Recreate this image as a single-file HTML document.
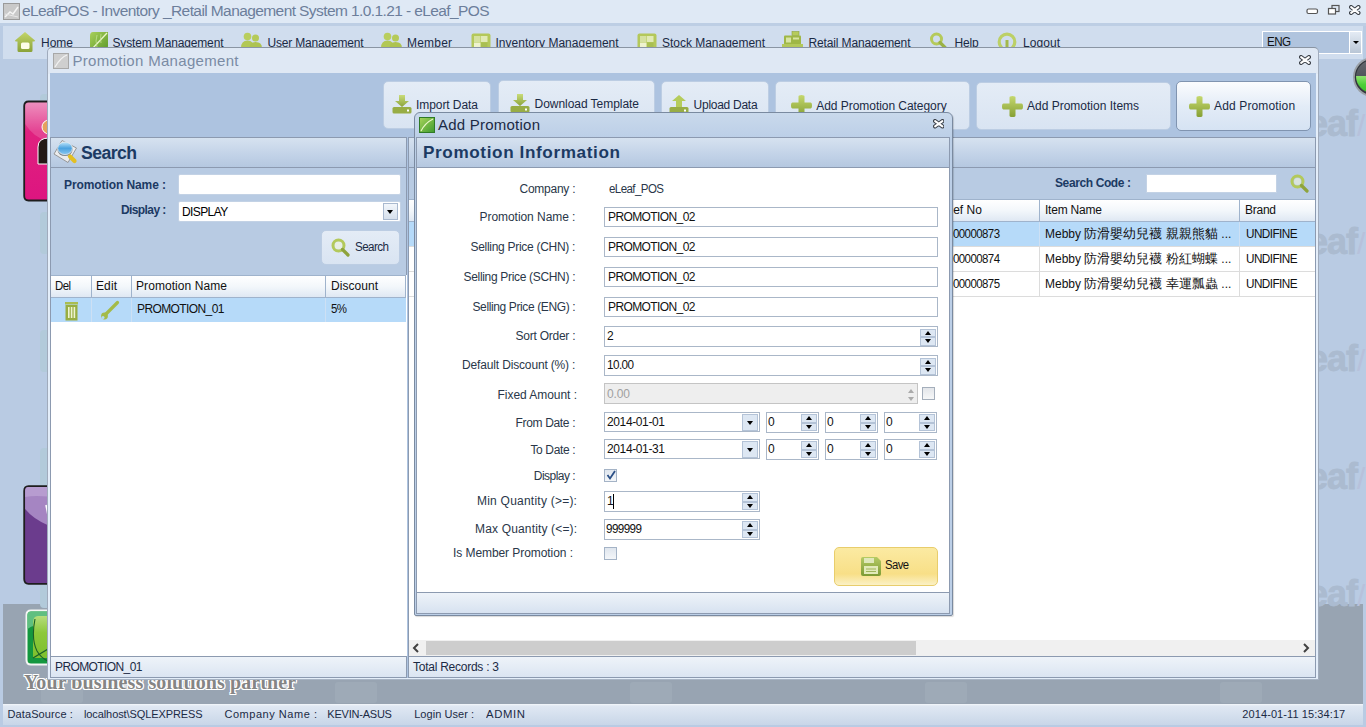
<!DOCTYPE html><html><head><meta charset="utf-8"><style>
html,body{margin:0;padding:0;width:1366px;height:727px;overflow:hidden;font-family:"Liberation Sans",sans-serif;}
body>div{position:absolute;box-sizing:border-box}
.t{white-space:nowrap}
</style></head><body>
<div style="left:0px;top:0px;width:1366px;height:727px;background:#b9cbe3"></div>
<div style="left:0px;top:0px;width:1366px;height:23px;background:#dfe9f5"></div>
<div style="left:0px;top:23px;width:1366px;height:3px;background:#bdcee4"></div>
<svg style="position:absolute;left:3px;top:3px" width="17" height="17" viewBox="0 0 17 17"><rect x="0.5" y="0.5" width="16" height="16" fill="#c9c9c9" stroke="#9a9a9a"/><path d="M2 14 L7 9 L10 11 L15 4" stroke="#f4f4f4" stroke-width="1.5" fill="none"/><path d="M2 11 L15 14" stroke="#e8e8e8" fill="none"/></svg>
<div class="t" style="left:22.0px;top:3.1px;font-size:15.5px;line-height:15.5px;font-weight:normal;color:#6c7e9b;letter-spacing:-0.59px;">eLeafPOS - Inventory _Retail Management System 1.0.1.21 - eLeaf_POS</div>
<svg style="position:absolute;left:1300px;top:0" width="66" height="22" viewBox="0 0 66 22">
<rect x="7" y="9" width="10.5" height="4.5" rx="1.5" fill="#fff" stroke="#555" stroke-width="1.2"/>
<rect x="32" y="5.5" width="7" height="6" fill="none" stroke="#555" stroke-width="1.2"/>
<rect x="28.5" y="8.5" width="7" height="5.5" fill="#fff" stroke="#555" stroke-width="1.2"/>

</svg>
<svg style="position:absolute;left:1349px;top:4.5px" width="11.5" height="10" viewBox="0 0 11.5 10"><path d="M2.1 2.1 L9.4 7.9 M9.4 2.1 L2.1 7.9" stroke="#3b4048" stroke-width="4.2" stroke-linecap="round"/><path d="M2.1 2.1 L9.4 7.9 M9.4 2.1 L2.1 7.9" stroke="#fff" stroke-width="2.0" stroke-linecap="round"/></svg>
<div style="left:3px;top:26px;width:1360px;height:33px;background:#d0ddee"></div>
<div class="t" style="left:41.0px;top:36.8px;font-size:12px;line-height:12px;font-weight:normal;color:#1b2a44;letter-spacing:-0.01px;">Home</div>
<div class="t" style="left:112.5px;top:36.8px;font-size:12px;line-height:12px;font-weight:normal;color:#1b2a44;letter-spacing:-0.15px;">System Management</div>
<div class="t" style="left:267.5px;top:36.8px;font-size:12px;line-height:12px;font-weight:normal;color:#1b2a44;letter-spacing:-0.19px;">User Management</div>
<div class="t" style="left:407.0px;top:36.8px;font-size:12px;line-height:12px;font-weight:normal;color:#1b2a44;letter-spacing:0.20px;">Member</div>
<div class="t" style="left:495.5px;top:36.8px;font-size:12px;line-height:12px;font-weight:normal;color:#1b2a44;letter-spacing:0.02px;">Inventory Management</div>
<div class="t" style="left:662.0px;top:36.8px;font-size:12px;line-height:12px;font-weight:normal;color:#1b2a44;letter-spacing:-0.02px;">Stock Management</div>
<div class="t" style="left:808.5px;top:36.8px;font-size:12px;line-height:12px;font-weight:normal;color:#1b2a44;letter-spacing:-0.13px;">Retail Management</div>
<div class="t" style="left:954.6px;top:36.8px;font-size:12px;line-height:12px;font-weight:normal;color:#1b2a44;letter-spacing:-0.23px;">Help</div>
<div class="t" style="left:1023.0px;top:36.8px;font-size:12px;line-height:12px;font-weight:normal;color:#1b2a44;letter-spacing:0.06px;">Logout</div>
<div style="left:1262px;top:31px;width:100px;height:23px;background:#fff"></div>
<div style="left:1263px;top:32px;width:86px;height:21px;background:#b0c4de"></div>
<div style="left:1350px;top:32px;width:11px;height:21px;background:linear-gradient(#e4ebf4,#b9c6d6)"></div>
<div class="t" style="left:1267.0px;top:36.3px;font-size:12px;line-height:12px;font-weight:normal;color:#111;letter-spacing:-0.60px;transform:scaleX(0.9677);transform-origin:0 0;">ENG</div>
<div style="left:1352.5px;top:41px;width:0;height:0;border-left:3px solid transparent;border-right:3px solid transparent;border-top:3.5px solid #000"></div>
<div style="left:3px;top:604px;width:1360px;height:100px;background:#98a4b2"></div>
<div style="left:3px;top:704px;width:1360px;height:21px;background:linear-gradient(#f4f7fb,#e0e8f3 2px,#c8d6e8)"></div>
<div class="t" style="left:7.5px;top:709.2px;font-size:11px;line-height:11px;font-weight:normal;color:#1b2a44;letter-spacing:0.11px;">DataSource :</div>
<div class="t" style="left:84.0px;top:709.2px;font-size:11px;line-height:11px;font-weight:normal;color:#1b2a44;letter-spacing:-0.10px;">localhost\SQLEXPRESS</div>
<div class="t" style="left:224.5px;top:709.2px;font-size:11px;line-height:11px;font-weight:normal;color:#1b2a44;letter-spacing:0.53px;">Company Name :</div>
<div class="t" style="left:327.3px;top:709.2px;font-size:11px;line-height:11px;font-weight:normal;color:#1b2a44;letter-spacing:-0.22px;">KEVIN-ASUS</div>
<div class="t" style="left:414.2px;top:709.2px;font-size:11px;line-height:11px;font-weight:normal;color:#1b2a44;letter-spacing:0.06px;">Login User :</div>
<div class="t" style="left:486.0px;top:709.2px;font-size:11px;line-height:11px;font-weight:normal;color:#1b2a44;letter-spacing:0.60px;transform:scaleX(1.0307);transform-origin:0 0;">ADMIN</div>
<div class="t" style="left:1242.3px;top:709.2px;font-size:11px;line-height:11px;font-weight:normal;color:#1b2a44;letter-spacing:0.09px;">2014-01-11 15:34:17</div>
<svg style="position:absolute;left:14px;top:31px" width="22" height="22" viewBox="0 0 22 22"><defs><linearGradient id="gh" x1="0" y1="0" x2="0" y2="1"><stop offset="0" stop-color="#c3d56a"/><stop offset="1" stop-color="#8aa238"/></linearGradient></defs>
<path d="M11 1 L21 9.5 Q21 10.5 20 10.5 H18.5 V19.5 Q18.5 21 17 21 H5 Q3.5 21 3.5 19.5 V10.5 H2 Q1 10.5 1 9.5 Z" fill="url(#gh)"/><rect x="7" y="11.5" width="8.5" height="6.5" rx="1.5" fill="#fdfde8"/></svg>
<svg style="position:absolute;left:89px;top:31px" width="20" height="20" viewBox="0 0 20 20"><defs><linearGradient id="glf" x1="0" y1="0" x2="1" y2="1"><stop offset="0" stop-color="#a9d05a"/><stop offset="1" stop-color="#5c9a2a"/></linearGradient></defs>
<path d="M4 1 H19 V15 Q19 19 15 19 H1 V5 Q1 1 4 1 Z" fill="url(#glf)"/><path d="M3 18 L18 2" stroke="#eaf5c8" stroke-width="1.3"/><path d="M8 4 Q6 10 8 16 M12 3 Q11 8 12 12" stroke="#c9e59a" stroke-width="0.7" fill="none"/></svg>
<svg style="position:absolute;left:241px;top:32px" width="21" height="16" viewBox="0 0 21 16"><circle cx="6.5" cy="4.5" r="3.8" fill="#b9ce5e"/><path d="M0 16 Q0 8.5 6.5 8.5 Q13 8.5 13 16 Z" fill="#b2c855"/><circle cx="14.5" cy="6" r="3.5" fill="#b5ca58"/><path d="M8.5 16 Q8.5 10 14.5 10 Q21 10 21 16 Z" fill="#adc350"/></svg>
<svg style="position:absolute;left:381px;top:32px" width="21" height="16" viewBox="0 0 21 16"><circle cx="6.5" cy="4.5" r="3.8" fill="#b9ce5e"/><path d="M0 16 Q0 8.5 6.5 8.5 Q13 8.5 13 16 Z" fill="#b2c855"/><circle cx="14.5" cy="6" r="3.5" fill="#b5ca58"/><path d="M8.5 16 Q8.5 10 14.5 10 Q21 10 21 16 Z" fill="#adc350"/></svg>
<svg style="position:absolute;left:471px;top:33px" width="20" height="15" viewBox="0 0 20 15"><rect x="0.5" y="0.5" width="19" height="16" rx="2" fill="#b4c85a"/><rect x="3" y="3" width="6.5" height="6" fill="#d5e1a0"/><rect x="10" y="3" width="6.5" height="6" fill="#e1eab5"/><rect x="3" y="9.5" width="6.5" height="6" fill="#eef3cf"/><rect x="10" y="9.5" width="6.5" height="6" fill="#a9bf52"/></svg>
<svg style="position:absolute;left:637px;top:33px" width="20" height="15" viewBox="0 0 20 15"><rect x="0.5" y="0.5" width="19" height="16" rx="2" fill="#b4c85a"/><rect x="3" y="3" width="6.5" height="6" fill="#d5e1a0"/><rect x="10" y="3" width="6.5" height="6" fill="#e1eab5"/><rect x="3" y="9.5" width="6.5" height="6" fill="#eef3cf"/><rect x="10" y="9.5" width="6.5" height="6" fill="#a9bf52"/></svg>
<svg style="position:absolute;left:782px;top:31px" width="21" height="17" viewBox="0 0 21 17"><rect x="10" y="0.5" width="7" height="4" fill="#b6cb5c" stroke="#8da23c" stroke-width="0.6"/><rect x="2" y="4.5" width="17" height="9" rx="1" fill="#9fb746"/><rect x="4" y="6.5" width="5" height="5" fill="#d8e4a2"/><rect x="11" y="6.5" width="6" height="2" fill="#d8e4a2"/><rect x="0" y="13" width="21" height="4" fill="#b3c85a"/></svg>
<svg style="position:absolute;left:929px;top:32px" width="19" height="16" viewBox="0 0 19 16"><circle cx="7.5" cy="7" r="5" fill="none" stroke="#b5ca5a" stroke-width="3"/><path d="M11 10.5 L16 15.5" stroke="#9bb244" stroke-width="3.2" stroke-linecap="round"/></svg>
<svg style="position:absolute;left:997px;top:32px" width="20" height="16" viewBox="0 0 20 16"><circle cx="10" cy="10" r="7.8" fill="none" stroke="#bcd066" stroke-width="3.2"/><rect x="8.5" y="8" width="3" height="8" fill="#a3b94a"/></svg>
<div class="t" style="left:1308px;top:106.4px;font-size:36px;line-height:36px;font-weight:bold;color:#abbbd0;letter-spacing:-1px;-webkit-text-stroke:0.8px #abbbd0">eaf<span style="color:#b7c1db;-webkit-text-stroke:0;font-weight:normal;font-size:30px">/</span></div>
<div class="t" style="left:1308px;top:223.9px;font-size:36px;line-height:36px;font-weight:bold;color:#abbbd0;letter-spacing:-1px;-webkit-text-stroke:0.8px #abbbd0">eaf<span style="color:#b7c1db;-webkit-text-stroke:0;font-weight:normal;font-size:30px">/</span></div>
<div class="t" style="left:1308px;top:341.4px;font-size:36px;line-height:36px;font-weight:bold;color:#abbbd0;letter-spacing:-1px;-webkit-text-stroke:0.8px #abbbd0">eaf<span style="color:#b7c1db;-webkit-text-stroke:0;font-weight:normal;font-size:30px">/</span></div>
<div class="t" style="left:1308px;top:458.9px;font-size:36px;line-height:36px;font-weight:bold;color:#abbbd0;letter-spacing:-1px;-webkit-text-stroke:0.8px #abbbd0">eaf<span style="color:#b7c1db;-webkit-text-stroke:0;font-weight:normal;font-size:30px">/</span></div>
<div class="t" style="left:1308px;top:576.4px;font-size:36px;line-height:36px;font-weight:bold;color:#abbbd0;letter-spacing:-1px;-webkit-text-stroke:0.8px #abbbd0">eaf<span style="color:#b7c1db;-webkit-text-stroke:0;font-weight:normal;font-size:30px">/</span></div>
<svg style="position:absolute;left:1352px;top:56px" width="14" height="42" viewBox="0 0 14 42"><defs><linearGradient id="gci" x1="0" y1="0" x2="0" y2="1"><stop offset="0" stop-color="#64696f"/><stop offset="1" stop-color="#3c4046"/></linearGradient><linearGradient id="ggr" x1="0" y1="0" x2="0" y2="1"><stop offset="0" stop-color="#8fe26f"/><stop offset="0.5" stop-color="#4fcf38"/><stop offset="1" stop-color="#3cbf2a"/></linearGradient></defs><circle cx="21" cy="21" r="20" fill="#9aa0a6"/><circle cx="21" cy="21" r="18.2" fill="#30343a"/><circle cx="21" cy="21" r="17" fill="url(#gci)"/><path d="M4 20 H38 A17 17 0 0 1 4 20 Z" fill="url(#ggr)"/></svg>
<div style="left:40px;top:94px;width:8px;height:42px;background:#b2cada;border-radius:4px 0 0 4px"></div>
<div style="left:40px;top:212px;width:8px;height:42px;background:#b2cada;border-radius:4px 0 0 4px"></div>
<div style="left:40px;top:330px;width:8px;height:42px;background:#b2cada;border-radius:4px 0 0 4px"></div>
<div style="left:40px;top:448px;width:8px;height:42px;background:#b2cada;border-radius:4px 0 0 4px"></div>
<div style="left:40px;top:566px;width:8px;height:42px;background:#b2cada;border-radius:4px 0 0 4px"></div>
<svg style="position:absolute;left:23px;top:100px" width="25" height="102" viewBox="0 0 25 102"><defs><linearGradient id="gpk" x1="0" y1="0" x2="0" y2="1"><stop offset="0" stop-color="#ea7db3"/><stop offset="0.3" stop-color="#e0217f"/><stop offset="1" stop-color="#dd1580"/></linearGradient></defs>
<path d="M30 1.5 H5.5 Q1.2 1.5 1.2 6 V96 Q1.2 100.5 5.5 100.5 H30" fill="url(#gpk)" stroke="#1e1e1e" stroke-width="1.8"/>
<path d="M2.2 24 Q12 40 30 42 V2.5 H5.5 Q2.2 2.5 2.2 6 Z" fill="#ffffff" opacity="0.16"/>
<circle cx="26" cy="27" r="7" fill="#e6a15e" stroke="#fff" stroke-width="1"/>
<path d="M15 64 V47 Q15 38 26 38 V64 Z" fill="#231816" stroke="#fff" stroke-width="1"/></svg>
<svg style="position:absolute;left:23px;top:485px" width="25" height="100" viewBox="0 0 25 100"><defs><linearGradient id="gpu" x1="0" y1="0" x2="0" y2="1"><stop offset="0" stop-color="#b9a0cf"/><stop offset="0.25" stop-color="#a27fbf"/><stop offset="0.26" stop-color="#6d3f8f"/><stop offset="1" stop-color="#6a3a8c"/></linearGradient></defs>
<path d="M30 1.2 H5.5 Q1.2 1.2 1.2 6 V94 Q1.2 98.8 5.5 98.8 H30" fill="#6b3c8d" stroke="#1e1e1e" stroke-width="1.8"/>
<path d="M2.1 6 Q2.1 2.1 5.5 2.1 H30 V42 Q12 36 2.1 24 Z" fill="#a585c2"/>
<path d="M2.1 6 Q2.1 2.1 5.5 2.1 H30 V12 Q12 10 2.1 12 Z" fill="#c3abd8" opacity="0.6"/>
<path d="M23 20 L25 30" stroke="#fff" stroke-width="1.6"/></svg>
<div style="left:41px;top:682px;width:42px;height:21px;background:#9eaab7;border-radius:3px"></div>
<div style="left:335px;top:682px;width:42px;height:21px;background:#9eaab7;border-radius:3px"></div>
<div style="left:630px;top:682px;width:42px;height:21px;background:#9eaab7;border-radius:3px"></div>
<div style="left:925px;top:682px;width:42px;height:21px;background:#9eaab7;border-radius:3px"></div>
<div style="left:1220px;top:682px;width:42px;height:21px;background:#9eaab7;border-radius:3px"></div>
<svg style="position:absolute;left:25px;top:609px" width="23" height="57" viewBox="0 0 23 57"><defs><linearGradient id="ggl" x1="0" y1="0" x2="0" y2="1"><stop offset="0" stop-color="#b5dd7c"/><stop offset="0.4" stop-color="#8cc83a"/><stop offset="1" stop-color="#7dbf2e"/></linearGradient></defs>
<path d="M30 1.5 H6 Q1.5 1.5 1.5 6 V51 Q1.5 55.5 6 55.5 H30" fill="#13973f" stroke="#f4f6f4" stroke-width="2"/>
<path d="M2.5 6 Q2.5 2.5 6 2.5 H30 V14 Q10 14 2.5 20 Z" fill="#5fbf80"/>
<path d="M30 7 H13 Q8 7 8 14 V49 H30 Z" fill="url(#ggl)"/>
<path d="M10 10 Q6 30 12 42 Q16 49 23 52" stroke="#1a5f28" stroke-width="1.1" fill="none"/><path d="M8 49 L23 40" stroke="#1a5f28" stroke-width="1.3"/></svg>
<div class="t" style="left:24px;top:670.5px;font-family:'Liberation Serif',serif;font-weight:bold;font-size:20px;line-height:22px;color:#858585;letter-spacing:0.1px;-webkit-text-stroke:0;text-shadow:-1px -1px 0 #fff,1px -1px 0 #fff,-1px 1px 0 #fff,1px 1px 0 #fff,0 1px 0 #fff,0 -1px 0 #fff,1px 0 0 #fff,-1px 0 0 #fff">Your business solutions partner</div>
<div style="left:47px;top:47px;width:1272px;height:633px;background:linear-gradient(#dfe8f4 26px,#e4eefa 26px);border:1px solid #a0abbc;border-top-color:#8a95a3;border-bottom-color:#a8b4c4;border-radius:5px 5px 0 0"></div>
<svg style="position:absolute;left:53px;top:53px" width="16" height="16" viewBox="0 0 16 16"><rect x="0.5" y="0.5" width="15" height="15" fill="#cfcfcf" stroke="#a8a8a8"/><path d="M2 14 Q8 4 14 2" stroke="#f2f2f2" stroke-width="1.3" fill="none"/></svg>
<div class="t" style="left:72.5px;top:53.3px;font-size:15px;line-height:15px;font-weight:normal;color:#7a8ba4;letter-spacing:0.31px;">Promotion Management</div>
<svg style="position:absolute;left:1298.5px;top:54.5px" width="12" height="10" viewBox="0 0 12 10"><path d="M2.1 2.1 L9.9 7.9 M9.9 2.1 L2.1 7.9" stroke="#3b4048" stroke-width="4.2" stroke-linecap="round"/><path d="M2.1 2.1 L9.9 7.9 M9.9 2.1 L2.1 7.9" stroke="#fff" stroke-width="2.0" stroke-linecap="round"/></svg>
<div style="left:50px;top:73px;width:1266px;height:605px;background:#adc3e0"></div>
<div style="left:383px;top:81px;width:108px;height:48px;border:1px solid #bccde3;border-radius:5px;background:linear-gradient(#e4ecf6,#d9e4f2);"></div>
<svg style="position:absolute;left:392px;top:95px" width="20" height="19" viewBox="0 0 20 19"><defs><linearGradient id="gdl1" x1="0" y1="0" x2="0" y2="1"><stop offset="0" stop-color="#c9dc7a"/><stop offset="1" stop-color="#8ba33a"/></linearGradient></defs><path d="M7 0 H13 V6 H17 L10 12 L3 6 H7 Z" fill="url(#gdl1)"/><rect x="0.5" y="12" width="19" height="6.5" rx="1.5" fill="#98ad45"/><rect x="15" y="14.5" width="2" height="2" fill="#fff"/></svg>
<div class="t" style="left:416.0px;top:98.8px;font-size:12px;line-height:12px;font-weight:normal;color:#1b2a44;letter-spacing:-0.07px;">Import Data</div>
<div style="left:498px;top:80px;width:157px;height:49px;border:1px solid #bccde3;border-radius:5px;background:linear-gradient(#e4ecf6,#d9e4f2);"></div>
<svg style="position:absolute;left:510px;top:94px" width="20" height="19" viewBox="0 0 20 19"><defs><linearGradient id="gdl2" x1="0" y1="0" x2="0" y2="1"><stop offset="0" stop-color="#c9dc7a"/><stop offset="1" stop-color="#8ba33a"/></linearGradient></defs><path d="M7 0 H13 V6 H17 L10 12 L3 6 H7 Z" fill="url(#gdl2)"/><rect x="0.5" y="12" width="19" height="6.5" rx="1.5" fill="#98ad45"/><rect x="15" y="14.5" width="2" height="2" fill="#fff"/></svg>
<div class="t" style="left:534.5px;top:98.3px;font-size:12px;line-height:12px;font-weight:normal;color:#1b2a44;letter-spacing:-0.04px;">Download Template</div>
<div style="left:661px;top:81px;width:108px;height:48px;border:1px solid #bccde3;border-radius:5px;background:linear-gradient(#e4ecf6,#d9e4f2);"></div>
<svg style="position:absolute;left:669px;top:95px" width="20" height="19" viewBox="0 0 20 19"><path d="M10 0 L17 6 H13 V12 H7 V6 H3 Z" fill="#b5cc5c"/><rect x="0.5" y="12" width="19" height="6.5" rx="1.5" fill="#98ad45"/><rect x="15" y="14.5" width="2" height="2" fill="#fff"/></svg>
<div class="t" style="left:693.6px;top:98.8px;font-size:12px;line-height:12px;font-weight:normal;color:#1b2a44;letter-spacing:-0.27px;">Upload Data</div>
<div style="left:775px;top:81px;width:195px;height:49px;border:1px solid #bccde3;border-radius:5px;background:linear-gradient(#e4ecf6,#d9e4f2);"></div>
<svg style="position:absolute;left:791px;top:95px" width="21" height="21" viewBox="0 0 21 21"><defs><linearGradient id="gp4" x1="0" y1="0" x2="0" y2="1"><stop offset="0" stop-color="#c5d86e"/><stop offset="1" stop-color="#86a034"/></linearGradient></defs><path d="M7.5 1.5 Q7.5 0 10.5 0 Q13.5 0 13.5 1.5 V7.5 H19.5 Q21 7.5 21 10.5 Q21 13.5 19.5 13.5 H13.5 V19.5 Q13.5 21 10.5 21 Q7.5 21 7.5 19.5 V13.5 H1.5 Q0 13.5 0 10.5 Q0 7.5 1.5 7.5 H7.5 Z" fill="url(#gp4)"/></svg>
<div class="t" style="left:816.3px;top:99.8px;font-size:12px;line-height:12px;font-weight:normal;color:#1b2a44;letter-spacing:-0.05px;">Add Promotion Category</div>
<div style="left:976px;top:82px;width:195px;height:48px;border:1px solid #bccde3;border-radius:5px;background:linear-gradient(#e4ecf6,#d9e4f2);"></div>
<svg style="position:absolute;left:1002px;top:96px" width="21" height="21" viewBox="0 0 21 21"><defs><linearGradient id="gp5" x1="0" y1="0" x2="0" y2="1"><stop offset="0" stop-color="#c5d86e"/><stop offset="1" stop-color="#86a034"/></linearGradient></defs><path d="M7.5 1.5 Q7.5 0 10.5 0 Q13.5 0 13.5 1.5 V7.5 H19.5 Q21 7.5 21 10.5 Q21 13.5 19.5 13.5 H13.5 V19.5 Q13.5 21 10.5 21 Q7.5 21 7.5 19.5 V13.5 H1.5 Q0 13.5 0 10.5 Q0 7.5 1.5 7.5 H7.5 Z" fill="url(#gp5)"/></svg>
<div class="t" style="left:1027.0px;top:99.8px;font-size:12px;line-height:12px;font-weight:normal;color:#1b2a44;letter-spacing:-0.00px;">Add Promotion Items</div>
<div style="left:1176px;top:81px;width:135px;height:50px;border:1px solid #8094b0;border-radius:5px;background:linear-gradient(#fbfcfe,#e3ecf7 50%,#d6e3f3);"></div>
<svg style="position:absolute;left:1189px;top:96px" width="21" height="21" viewBox="0 0 21 21"><defs><linearGradient id="gp6" x1="0" y1="0" x2="0" y2="1"><stop offset="0" stop-color="#c5d86e"/><stop offset="1" stop-color="#86a034"/></linearGradient></defs><path d="M7.5 1.5 Q7.5 0 10.5 0 Q13.5 0 13.5 1.5 V7.5 H19.5 Q21 7.5 21 10.5 Q21 13.5 19.5 13.5 H13.5 V19.5 Q13.5 21 10.5 21 Q7.5 21 7.5 19.5 V13.5 H1.5 Q0 13.5 0 10.5 Q0 7.5 1.5 7.5 H7.5 Z" fill="url(#gp6)"/></svg>
<div class="t" style="left:1214.0px;top:99.8px;font-size:12px;line-height:12px;font-weight:normal;color:#1b2a44;letter-spacing:0.14px;">Add Promotion</div>
<div style="left:50px;top:137px;width:357px;height:541px;border:1px solid #8c9ab0;background:#b8cbe3"></div>
<div style="left:50px;top:137px;width:357px;height:31px;border:1px solid #8c9ab0;background:linear-gradient(#d6e2f0,#c3d3e8 55%,#b5c8e0);"></div>
<svg style="position:absolute;left:53px;top:139px" width="26" height="26" viewBox="0 0 26 26"><defs><linearGradient id="glens" x1="0" y1="0" x2="0" y2="1"><stop offset="0" stop-color="#bfe6fb"/><stop offset="0.5" stop-color="#4aa2e0"/><stop offset="1" stop-color="#8cc8ef"/></linearGradient></defs>
<path d="M1 15 L9 1.5 L23.5 9 L15 23.5 Z" fill="#ececec" stroke="#8f8f8f" stroke-width="0.9"/>
<ellipse cx="12" cy="10.5" rx="7.6" ry="6.6" fill="#7d8790"/>
<ellipse cx="12" cy="9.3" rx="7.3" ry="6.3" fill="url(#glens)" stroke="#dfe9ef" stroke-width="0.8"/>
<path d="M17 17.5 L21.5 22" stroke="#e3bf22" stroke-width="4.2" stroke-linecap="round"/>
</svg>
<div class="t" style="left:81.0px;top:143.8px;font-size:18px;line-height:18px;font-weight:bold;color:#1c3a63;letter-spacing:-0.60px;transform:scaleX(0.9816);transform-origin:0 0;">Search</div>
<div class="t" style="left:64.0px;top:178.8px;font-size:12px;line-height:12px;font-weight:bold;color:#1c3a63;letter-spacing:-0.09px;">Promotion Name :</div>
<div class="t" style="left:121.0px;top:203.8px;font-size:12px;line-height:12px;font-weight:bold;color:#1c3a63;letter-spacing:-0.60px;">Display :</div>
<div style="left:178px;top:174px;width:223px;height:21px;background:#fff;border:1px solid #c3d2e5;border-radius:2px"></div>
<div style="left:178px;top:201px;width:223px;height:21px;background:#fff;border:1px solid #c3d2e5;border-radius:2px"></div>
<div class="t" style="left:182.0px;top:205.8px;font-size:12px;line-height:12px;font-weight:normal;color:#000;letter-spacing:-0.60px;">DISPLAY</div>
<div style="left:383px;top:203px;width:15px;height:17px;border:1px solid #a9b9cf;background:linear-gradient(#f2f6fb,#d6e0ec)"></div>
<div style="left:387px;top:210px;width:0;height:0;border-left:3.5px solid transparent;border-right:3.5px solid transparent;border-top:4px solid #000"></div>
<div style="left:321px;top:230px;width:79px;height:35px;border:1px solid #bccde3;border-radius:5px;background:linear-gradient(#e4ecf6,#d9e4f2)"></div>
<svg style="position:absolute;left:331px;top:238px" width="19" height="19" viewBox="0 0 19 19"><circle cx="7.5" cy="7.5" r="5.5" fill="none" stroke="#b3c95b" stroke-width="3"/><circle cx="7.5" cy="7.5" r="3.5" fill="#eef4d8" opacity="0.6"/><path d="M11.5 11.5 L17 17" stroke="#8ea33c" stroke-width="3.2" stroke-linecap="round"/></svg>
<div class="t" style="left:355.0px;top:240.8px;font-size:12px;line-height:12px;font-weight:normal;color:#1b2a44;letter-spacing:-0.60px;transform:scaleX(0.9710);transform-origin:0 0;">Search</div>
<div style="left:51px;top:275px;width:356px;height:381px;background:#fff"></div>
<div style="left:51px;top:275px;width:355px;height:23px;background:linear-gradient(#ffffff,#f3f7fb 50%,#dfe8f3);border:1px solid #9fb3cc;border-left:none"></div>
<div style="left:91px;top:276px;width:1px;height:21px;background:#9fb3cc"></div>
<div style="left:131px;top:276px;width:1px;height:21px;background:#9fb3cc"></div>
<div style="left:325px;top:276px;width:1px;height:21px;background:#9fb3cc"></div>
<div class="t" style="left:55.0px;top:279.8px;font-size:12px;line-height:12px;font-weight:normal;color:#111;letter-spacing:-0.60px;transform:scaleX(0.9515);transform-origin:0 0;">Del</div>
<div class="t" style="left:96.0px;top:279.8px;font-size:12px;line-height:12px;font-weight:normal;color:#111;letter-spacing:0.11px;">Edit</div>
<div class="t" style="left:136.0px;top:279.8px;font-size:12px;line-height:12px;font-weight:normal;color:#111;letter-spacing:0.07px;">Promotion Name</div>
<div class="t" style="left:331.0px;top:279.8px;font-size:12px;line-height:12px;font-weight:normal;color:#111;letter-spacing:0.04px;">Discount</div>
<div style="left:51px;top:298px;width:355px;height:24px;background:#b6daf9"></div>
<div style="left:91px;top:298px;width:1px;height:24px;background:#cde0f4"></div>
<div style="left:131px;top:298px;width:1px;height:24px;background:#cde0f4"></div>
<div style="left:325px;top:298px;width:1px;height:24px;background:#cde0f4"></div>
<svg style="position:absolute;left:64px;top:301px" width="15" height="20" viewBox="0 0 15 20"><rect x="1" y="1" width="13" height="2.5" fill="#a9bd52"/><rect x="1.5" y="4" width="12" height="15.5" fill="#98ae42"/><rect x="4" y="6" width="1.6" height="11" fill="#eef3d0"/><rect x="6.8" y="6" width="1.6" height="11" fill="#eef3d0"/><rect x="9.6" y="6" width="1.6" height="11" fill="#eef3d0"/></svg>
<svg style="position:absolute;left:100px;top:300px" width="21" height="21" viewBox="0 0 21 21"><path d="M17.5 2.5 L5 15" stroke="#a4bb48" stroke-width="3.2" stroke-linecap="round"/><circle cx="4.5" cy="16" r="3.4" fill="#a4bb48"/><circle cx="3" cy="17.5" r="1.5" fill="#b6daf9"/></svg>
<div class="t" style="left:137.0px;top:302.8px;font-size:12px;line-height:12px;font-weight:normal;color:#111;letter-spacing:-0.60px;">PROMOTION_01</div>
<div class="t" style="left:331.0px;top:302.8px;font-size:12px;line-height:12px;font-weight:normal;color:#111;letter-spacing:-0.60px;transform:scaleX(0.9556);transform-origin:0 0;">5%</div>
<div style="left:50px;top:656px;width:357px;height:22px;border:1px solid #8c9ab0;background:linear-gradient(#eef3f9,#dbe5f2)"></div>
<div class="t" style="left:55.0px;top:660.8px;font-size:12px;line-height:12px;font-weight:normal;color:#1b2a44;letter-spacing:-0.60px;">PROMOTION_01</div>
<div style="left:408px;top:137px;width:908px;height:541px;border:1px solid #8c9ab0;background:#b8cbe3"></div>
<div style="left:408px;top:137px;width:908px;height:31px;border:1px solid #8c9ab0;background:linear-gradient(#d6e2f0,#c3d3e8 55%,#b5c8e0);"></div>
<div class="t" style="left:1055.0px;top:176.8px;font-size:12px;line-height:12px;font-weight:bold;color:#1c3a63;letter-spacing:-0.39px;">Search Code :</div>
<div style="left:1146px;top:174px;width:131px;height:19px;background:#fff;border:1px solid #c3d2e5"></div>
<svg style="position:absolute;left:1290px;top:174px" width="19" height="19" viewBox="0 0 19 19"><circle cx="7.5" cy="7.5" r="5.5" fill="none" stroke="#b3c95b" stroke-width="3"/><circle cx="7.5" cy="7.5" r="3.5" fill="#eef4d8" opacity="0.6"/><path d="M11.5 11.5 L17 17" stroke="#8ea33c" stroke-width="3.2" stroke-linecap="round"/></svg>
<div style="left:409px;top:199px;width:906px;height:457px;background:#fff"></div>
<div style="left:409px;top:199px;width:906px;height:23px;background:linear-gradient(#ffffff,#f3f7fb 50%,#dfe8f3);border-top:1px solid #9fb3cc;border-bottom:1px solid #9fb3cc"></div>
<div style="left:1039px;top:200px;width:1px;height:21px;background:#9fb3cc"></div>
<div style="left:1239px;top:200px;width:1px;height:21px;background:#9fb3cc"></div>
<div class="t" style="left:944.5px;top:203.8px;font-size:12px;line-height:12px;font-weight:normal;color:#111;letter-spacing:0.00px;">Ref No</div>
<div class="t" style="left:1045.0px;top:203.8px;font-size:12px;line-height:12px;font-weight:normal;color:#111;letter-spacing:-0.21px;">Item Name</div>
<div class="t" style="left:1245.0px;top:203.8px;font-size:12px;line-height:12px;font-weight:normal;color:#111;letter-spacing:-0.25px;">Brand</div>
<div style="left:409px;top:222px;width:906px;height:24px;background:#b6daf9"></div>
<div style="left:409px;top:246px;width:906px;height:1px;background:#dcdcdc"></div>
<div style="left:1039px;top:222px;width:1px;height:24px;background:#cde0f4"></div>
<div style="left:1239px;top:222px;width:1px;height:24px;background:#cde0f4"></div>
<div class="t" style="left:953.0px;top:228.3px;font-size:12px;line-height:12px;font-weight:normal;color:#111;letter-spacing:-0.60px;transform:scaleX(0.9558);transform-origin:0 0;">00000873</div>
<div class="t" style="left:1045px;top:228.3px;font-size:12px;line-height:12px;color:#111">Mebby <span style="font-size:13px">防滑嬰幼兒襪 親親熊貓</span> ...</div>
<div class="t" style="left:1245.5px;top:228.3px;font-size:12px;line-height:12px;font-weight:normal;color:#111;letter-spacing:-0.60px;transform:scaleX(0.9815);transform-origin:0 0;">UNDIFINE</div>
<div style="left:409px;top:271px;width:906px;height:1px;background:#dcdcdc"></div>
<div style="left:1039px;top:247px;width:1px;height:24px;background:#dcdcdc"></div>
<div style="left:1239px;top:247px;width:1px;height:24px;background:#dcdcdc"></div>
<div class="t" style="left:953.0px;top:253.3px;font-size:12px;line-height:12px;font-weight:normal;color:#111;letter-spacing:-0.60px;transform:scaleX(0.9558);transform-origin:0 0;">00000874</div>
<div class="t" style="left:1045px;top:253.3px;font-size:12px;line-height:12px;color:#111">Mebby <span style="font-size:13px">防滑嬰幼兒襪 粉紅蝴蝶</span> ...</div>
<div class="t" style="left:1245.5px;top:253.3px;font-size:12px;line-height:12px;font-weight:normal;color:#111;letter-spacing:-0.60px;transform:scaleX(0.9815);transform-origin:0 0;">UNDIFINE</div>
<div style="left:409px;top:296px;width:906px;height:1px;background:#dcdcdc"></div>
<div style="left:1039px;top:272px;width:1px;height:24px;background:#dcdcdc"></div>
<div style="left:1239px;top:272px;width:1px;height:24px;background:#dcdcdc"></div>
<div class="t" style="left:953.0px;top:278.3px;font-size:12px;line-height:12px;font-weight:normal;color:#111;letter-spacing:-0.60px;transform:scaleX(0.9558);transform-origin:0 0;">00000875</div>
<div class="t" style="left:1045px;top:278.3px;font-size:12px;line-height:12px;color:#111">Mebby <span style="font-size:13px">防滑嬰幼兒襪 幸運瓢蟲</span> ...</div>
<div class="t" style="left:1245.5px;top:278.3px;font-size:12px;line-height:12px;font-weight:normal;color:#111;letter-spacing:-0.60px;transform:scaleX(0.9815);transform-origin:0 0;">UNDIFINE</div>
<div style="left:409px;top:640px;width:906px;height:16px;background:#f0f0f0"></div>
<div style="left:426px;top:641px;width:490px;height:14px;background:#cdcdcd"></div>
<svg style="position:absolute;left:412px;top:643px" width="8" height="10" viewBox="0 0 8 10"><path d="M6 1 L2 5 L6 9" stroke="#404040" stroke-width="2" fill="none"/></svg>
<svg style="position:absolute;left:1302px;top:643px" width="8" height="10" viewBox="0 0 8 10"><path d="M2 1 L6 5 L2 9" stroke="#404040" stroke-width="2" fill="none"/></svg>
<div style="left:408px;top:656px;width:908px;height:22px;border:1px solid #8c9ab0;background:linear-gradient(#eef3f9,#dbe5f2)"></div>
<div class="t" style="left:413.0px;top:660.8px;font-size:12px;line-height:12px;font-weight:normal;color:#1b2a44;letter-spacing:-0.25px;">Total Records : 3</div>
<div style="left:414px;top:112px;width:539px;height:504px;border:1px solid #7a8aa0;border-radius:6px 6px 2px 2px;background:linear-gradient(#c9d9ec,#bccfe7 25px,#bccfe7);box-shadow:1px 1px 1px rgba(0,0,0,0.15)"></div>
<svg style="position:absolute;left:419px;top:117px" width="16" height="16" viewBox="0 0 16 16"><defs><linearGradient id="gl" x1="0" y1="0" x2="1" y2="1"><stop offset="0" stop-color="#a8d45a"/><stop offset="1" stop-color="#3d9a2e"/></linearGradient></defs><rect x="0.5" y="0.5" width="15" height="15" fill="url(#gl)" stroke="#2f7a25"/><path d="M2 14 Q6 6 14 2" stroke="#e9f6c8" stroke-width="1.2" fill="none"/></svg>
<div class="t" style="left:438.0px;top:116.8px;font-size:15px;line-height:15px;font-weight:normal;color:#1b2a44;letter-spacing:0.23px;">Add Promotion</div>
<svg style="position:absolute;left:932.5px;top:119px" width="11.5" height="9.5" viewBox="0 0 11.5 9.5"><path d="M2.1 2.1 L9.4 7.4 M9.4 2.1 L2.1 7.4" stroke="#3b4048" stroke-width="4.2" stroke-linecap="round"/><path d="M2.1 2.1 L9.4 7.4 M9.4 2.1 L2.1 7.4" stroke="#fff" stroke-width="2.0" stroke-linecap="round"/></svg>
<div style="left:416px;top:137px;width:534px;height:477px;border:1px solid #8c9ab0;background:#fff"></div>
<div style="left:416px;top:137px;width:534px;height:31px;border:1px solid #8c9ab0;background:linear-gradient(#d6e2f0,#c3d3e8 55%,#b5c8e0)"></div>
<div class="t" style="left:423.0px;top:144.2px;font-size:17px;line-height:17px;font-weight:bold;color:#1c3a63;letter-spacing:0.60px;transform:scaleX(1.0092);transform-origin:0 0;">Promotion Information</div>
<div style="left:416px;top:592px;width:534px;height:22px;border:1px solid #8c9ab0;background:linear-gradient(#eef3f9,#d7e2f0)"></div>
<div class="t" style="left:519.5px;top:183.3px;font-size:12px;line-height:12px;font-weight:normal;color:#2a3749;letter-spacing:-0.25px;">Company :</div>
<div class="t" style="left:609.0px;top:183.3px;font-size:12px;line-height:12px;font-weight:normal;color:#2a3749;letter-spacing:-0.60px;transform:scaleX(0.9613);transform-origin:0 0;">eLeaf_POS</div>
<div class="t" style="left:479.5px;top:210.8px;font-size:12px;line-height:12px;font-weight:normal;color:#2a3749;letter-spacing:-0.05px;">Promotion Name :</div>
<div style="left:604px;top:207px;width:334px;height:20px;border:1px solid #aab7c8;background:#fff"></div>
<div class="t" style="left:608.0px;top:210.8px;font-size:12px;line-height:12px;font-weight:normal;color:#111;letter-spacing:-0.60px;">PROMOTION_02</div>
<div class="t" style="left:470.5px;top:240.8px;font-size:12px;line-height:12px;font-weight:normal;color:#2a3749;letter-spacing:-0.29px;">Selling Price (CHN) :</div>
<div style="left:604px;top:237px;width:334px;height:20px;border:1px solid #aab7c8;background:#fff"></div>
<div class="t" style="left:608.0px;top:240.8px;font-size:12px;line-height:12px;font-weight:normal;color:#111;letter-spacing:-0.60px;">PROMOTION_02</div>
<div class="t" style="left:463.5px;top:270.8px;font-size:12px;line-height:12px;font-weight:normal;color:#2a3749;letter-spacing:-0.32px;">Selling Price (SCHN) :</div>
<div style="left:604px;top:267px;width:334px;height:20px;border:1px solid #aab7c8;background:#fff"></div>
<div class="t" style="left:608.0px;top:270.8px;font-size:12px;line-height:12px;font-weight:normal;color:#111;letter-spacing:-0.60px;">PROMOTION_02</div>
<div class="t" style="left:472.5px;top:300.8px;font-size:12px;line-height:12px;font-weight:normal;color:#2a3749;letter-spacing:-0.38px;">Selling Price (ENG) :</div>
<div style="left:604px;top:297px;width:334px;height:20px;border:1px solid #aab7c8;background:#fff"></div>
<div class="t" style="left:608.0px;top:300.8px;font-size:12px;line-height:12px;font-weight:normal;color:#111;letter-spacing:-0.60px;">PROMOTION_02</div>
<div class="t" style="left:515.5px;top:330.3px;font-size:12px;line-height:12px;font-weight:normal;color:#2a3749;letter-spacing:-0.24px;">Sort Order :</div>
<div style="left:604px;top:326px;width:334px;height:21px;border:1px solid #aab7c8;background:#fff"></div>
<div style="left:920px;top:328.5px;width:16px;height:8.5px;border:1px solid #b4c3d7;background:#dde7f3"></div>
<div style="left:920px;top:337.0px;width:16px;height:8.5px;border:1px solid #b4c3d7;background:#dde7f3"></div>
<div style="left:924.5px;top:330.5px;width:0;height:0;border-left:3.5px solid transparent;border-right:3.5px solid transparent;border-bottom:4px solid #000"></div>
<div style="left:924.5px;top:339.0px;width:0;height:0;border-left:3.5px solid transparent;border-right:3.5px solid transparent;border-top:4px solid #000"></div>
<div class="t" style="left:607.0px;top:330.3px;font-size:12px;line-height:12px;font-weight:normal;color:#111;letter-spacing:0.00px;">2</div>
<div class="t" style="left:462.1px;top:359.3px;font-size:12px;line-height:12px;font-weight:normal;color:#2a3749;letter-spacing:-0.16px;">Default Discount (%) :</div>
<div style="left:604px;top:355px;width:334px;height:21px;border:1px solid #aab7c8;background:#fff"></div>
<div style="left:920px;top:357.5px;width:16px;height:8.5px;border:1px solid #b4c3d7;background:#dde7f3"></div>
<div style="left:920px;top:366.0px;width:16px;height:8.5px;border:1px solid #b4c3d7;background:#dde7f3"></div>
<div style="left:924.5px;top:359.5px;width:0;height:0;border-left:3.5px solid transparent;border-right:3.5px solid transparent;border-bottom:4px solid #000"></div>
<div style="left:924.5px;top:368.0px;width:0;height:0;border-left:3.5px solid transparent;border-right:3.5px solid transparent;border-top:4px solid #000"></div>
<div class="t" style="left:607.0px;top:359.3px;font-size:12px;line-height:12px;font-weight:normal;color:#111;letter-spacing:-0.60px;transform:scaleX(0.9777);transform-origin:0 0;">10.00</div>
<div class="t" style="left:497.5px;top:388.8px;font-size:12px;line-height:12px;font-weight:normal;color:#2a3749;letter-spacing:-0.04px;">Fixed Amount :</div>
<div style="left:604px;top:383px;width:314px;height:21px;border:1px solid #c4c4c4;background:#eeeeee"></div>
<div style="left:908px;top:389px;width:0;height:0;border-left:3.5px solid transparent;border-right:3.5px solid transparent;border-bottom:4px solid #aaa"></div>
<div style="left:908px;top:396.5px;width:0;height:0;border-left:3.5px solid transparent;border-right:3.5px solid transparent;border-top:4px solid #aaa"></div>
<div class="t" style="left:607.0px;top:387.8px;font-size:12px;line-height:12px;font-weight:normal;color:#a0a0a0;letter-spacing:-0.11px;">0.00</div>
<div style="left:922px;top:387px;width:13px;height:13px;border:1px solid #a4aebb;background:linear-gradient(#e3e6ea,#f6f7f8)"></div>
<div class="t" style="left:515.5px;top:416.8px;font-size:12px;line-height:12px;font-weight:normal;color:#2a3749;letter-spacing:-0.33px;">From Date :</div>
<div style="left:604px;top:412px;width:156px;height:20px;border:1px solid #aab7c8;background:#fff"></div>
<div style="left:742px;top:414px;width:16px;height:17px;border:1px solid #b4c3d7;background:#dde7f3"></div>
<div style="left:746.5px;top:421.0px;width:0;height:0;border-left:3.5px solid transparent;border-right:3.5px solid transparent;border-top:4px solid #000"></div>
<div class="t" style="left:607.0px;top:415.8px;font-size:12px;line-height:12px;font-weight:normal;color:#111;letter-spacing:-0.38px;">2014-01-01</div>
<div style="left:766px;top:412px;width:53px;height:21px;border:1px solid #aab7c8;background:#fff"></div>
<div style="left:801px;top:414px;width:16px;height:8.5px;border:1px solid #b4c3d7;background:#dde7f3"></div>
<div style="left:801px;top:422.5px;width:16px;height:8.5px;border:1px solid #b4c3d7;background:#dde7f3"></div>
<div style="left:805.5px;top:416.0px;width:0;height:0;border-left:3.5px solid transparent;border-right:3.5px solid transparent;border-bottom:4px solid #000"></div>
<div style="left:805.5px;top:424.5px;width:0;height:0;border-left:3.5px solid transparent;border-right:3.5px solid transparent;border-top:4px solid #000"></div>
<div class="t" style="left:768.0px;top:415.8px;font-size:12px;line-height:12px;font-weight:normal;color:#111;letter-spacing:0.00px;">0</div>
<div style="left:825px;top:412px;width:53px;height:21px;border:1px solid #aab7c8;background:#fff"></div>
<div style="left:860px;top:414px;width:16px;height:8.5px;border:1px solid #b4c3d7;background:#dde7f3"></div>
<div style="left:860px;top:422.5px;width:16px;height:8.5px;border:1px solid #b4c3d7;background:#dde7f3"></div>
<div style="left:864.5px;top:416.0px;width:0;height:0;border-left:3.5px solid transparent;border-right:3.5px solid transparent;border-bottom:4px solid #000"></div>
<div style="left:864.5px;top:424.5px;width:0;height:0;border-left:3.5px solid transparent;border-right:3.5px solid transparent;border-top:4px solid #000"></div>
<div class="t" style="left:827.0px;top:415.8px;font-size:12px;line-height:12px;font-weight:normal;color:#111;letter-spacing:0.00px;">0</div>
<div style="left:884px;top:412px;width:53px;height:21px;border:1px solid #aab7c8;background:#fff"></div>
<div style="left:919px;top:414px;width:16px;height:8.5px;border:1px solid #b4c3d7;background:#dde7f3"></div>
<div style="left:919px;top:422.5px;width:16px;height:8.5px;border:1px solid #b4c3d7;background:#dde7f3"></div>
<div style="left:923.5px;top:416.0px;width:0;height:0;border-left:3.5px solid transparent;border-right:3.5px solid transparent;border-bottom:4px solid #000"></div>
<div style="left:923.5px;top:424.5px;width:0;height:0;border-left:3.5px solid transparent;border-right:3.5px solid transparent;border-top:4px solid #000"></div>
<div class="t" style="left:886.0px;top:415.8px;font-size:12px;line-height:12px;font-weight:normal;color:#111;letter-spacing:0.00px;">0</div>
<div class="t" style="left:530.5px;top:443.8px;font-size:12px;line-height:12px;font-weight:normal;color:#2a3749;letter-spacing:-0.38px;">To Date :</div>
<div style="left:604px;top:439px;width:156px;height:20px;border:1px solid #aab7c8;background:#fff"></div>
<div style="left:742px;top:441px;width:16px;height:17px;border:1px solid #b4c3d7;background:#dde7f3"></div>
<div style="left:746.5px;top:448.0px;width:0;height:0;border-left:3.5px solid transparent;border-right:3.5px solid transparent;border-top:4px solid #000"></div>
<div class="t" style="left:607.0px;top:442.8px;font-size:12px;line-height:12px;font-weight:normal;color:#111;letter-spacing:-0.38px;">2014-01-31</div>
<div style="left:766px;top:439px;width:53px;height:21px;border:1px solid #aab7c8;background:#fff"></div>
<div style="left:801px;top:441px;width:16px;height:8.5px;border:1px solid #b4c3d7;background:#dde7f3"></div>
<div style="left:801px;top:449.5px;width:16px;height:8.5px;border:1px solid #b4c3d7;background:#dde7f3"></div>
<div style="left:805.5px;top:443.0px;width:0;height:0;border-left:3.5px solid transparent;border-right:3.5px solid transparent;border-bottom:4px solid #000"></div>
<div style="left:805.5px;top:451.5px;width:0;height:0;border-left:3.5px solid transparent;border-right:3.5px solid transparent;border-top:4px solid #000"></div>
<div class="t" style="left:768.0px;top:442.8px;font-size:12px;line-height:12px;font-weight:normal;color:#111;letter-spacing:0.00px;">0</div>
<div style="left:825px;top:439px;width:53px;height:21px;border:1px solid #aab7c8;background:#fff"></div>
<div style="left:860px;top:441px;width:16px;height:8.5px;border:1px solid #b4c3d7;background:#dde7f3"></div>
<div style="left:860px;top:449.5px;width:16px;height:8.5px;border:1px solid #b4c3d7;background:#dde7f3"></div>
<div style="left:864.5px;top:443.0px;width:0;height:0;border-left:3.5px solid transparent;border-right:3.5px solid transparent;border-bottom:4px solid #000"></div>
<div style="left:864.5px;top:451.5px;width:0;height:0;border-left:3.5px solid transparent;border-right:3.5px solid transparent;border-top:4px solid #000"></div>
<div class="t" style="left:827.0px;top:442.8px;font-size:12px;line-height:12px;font-weight:normal;color:#111;letter-spacing:0.00px;">0</div>
<div style="left:884px;top:439px;width:53px;height:21px;border:1px solid #aab7c8;background:#fff"></div>
<div style="left:919px;top:441px;width:16px;height:8.5px;border:1px solid #b4c3d7;background:#dde7f3"></div>
<div style="left:919px;top:449.5px;width:16px;height:8.5px;border:1px solid #b4c3d7;background:#dde7f3"></div>
<div style="left:923.5px;top:443.0px;width:0;height:0;border-left:3.5px solid transparent;border-right:3.5px solid transparent;border-bottom:4px solid #000"></div>
<div style="left:923.5px;top:451.5px;width:0;height:0;border-left:3.5px solid transparent;border-right:3.5px solid transparent;border-top:4px solid #000"></div>
<div class="t" style="left:886.0px;top:442.8px;font-size:12px;line-height:12px;font-weight:normal;color:#111;letter-spacing:0.00px;">0</div>
<div class="t" style="left:533.8px;top:469.8px;font-size:12px;line-height:12px;font-weight:normal;color:#2a3749;letter-spacing:-0.54px;">Display :</div>
<div style="left:604px;top:469px;width:13px;height:13px;border:1px solid #a4b3c6;background:linear-gradient(#dfe6ee,#f4f6f9)"></div>
<svg style="position:absolute;left:605px;top:469px" width="12" height="12" viewBox="0 0 12 12"><path d="M2.5 6 L5 9.5 L10 2" stroke="#2a4f86" stroke-width="1.8" fill="none"/></svg>
<div class="t" style="left:477.0px;top:495.4px;font-size:12px;line-height:12px;font-weight:normal;color:#2a3749;letter-spacing:0.23px;">Min Quantity (&gt;=):</div>
<div style="left:604px;top:491px;width:156px;height:21px;border:1px solid #aab7c8;background:#fff"></div>
<div style="left:742px;top:493px;width:16px;height:8.5px;border:1px solid #b4c3d7;background:#dde7f3"></div>
<div style="left:742px;top:501.5px;width:16px;height:8.5px;border:1px solid #b4c3d7;background:#dde7f3"></div>
<div style="left:746.5px;top:495.0px;width:0;height:0;border-left:3.5px solid transparent;border-right:3.5px solid transparent;border-bottom:4px solid #000"></div>
<div style="left:746.5px;top:503.5px;width:0;height:0;border-left:3.5px solid transparent;border-right:3.5px solid transparent;border-top:4px solid #000"></div>
<div class="t" style="left:607.0px;top:495.3px;font-size:12px;line-height:12px;font-weight:normal;color:#111;letter-spacing:0.00px;">1</div>
<div style="left:613px;top:494px;width:1px;height:15px;background:#000"></div>
<div class="t" style="left:475.0px;top:523.1px;font-size:12px;line-height:12px;font-weight:normal;color:#2a3749;letter-spacing:0.16px;">Max Quantity (&lt;=):</div>
<div style="left:604px;top:519px;width:156px;height:21px;border:1px solid #aab7c8;background:#fff"></div>
<div style="left:742px;top:521px;width:16px;height:8.5px;border:1px solid #b4c3d7;background:#dde7f3"></div>
<div style="left:742px;top:529.5px;width:16px;height:8.5px;border:1px solid #b4c3d7;background:#dde7f3"></div>
<div style="left:746.5px;top:523.0px;width:0;height:0;border-left:3.5px solid transparent;border-right:3.5px solid transparent;border-bottom:4px solid #000"></div>
<div style="left:746.5px;top:531.5px;width:0;height:0;border-left:3.5px solid transparent;border-right:3.5px solid transparent;border-top:4px solid #000"></div>
<div class="t" style="left:606.0px;top:523.3px;font-size:12px;line-height:12px;font-weight:normal;color:#111;letter-spacing:-0.60px;transform:scaleX(0.9722);transform-origin:0 0;">999999</div>
<div class="t" style="left:453.0px;top:547.0px;font-size:12px;line-height:12px;font-weight:normal;color:#2a3749;letter-spacing:-0.07px;">Is Member Promotion :</div>
<div style="left:604px;top:547px;width:13px;height:13px;border:1px solid #a4b3c6;background:linear-gradient(#dfe6ee,#f4f6f9)"></div>
<div style="left:834px;top:547px;width:104px;height:39px;border:1px solid #e8cd6c;border-radius:5px;background:linear-gradient(#fbeaa2,#f8df87 70%,#fbf1c6)"></div>
<svg style="position:absolute;left:861px;top:557px" width="20" height="19" viewBox="0 0 20 19"><defs><linearGradient id="gs" x1="0" y1="0" x2="0" y2="1"><stop offset="0" stop-color="#b5cb64"/><stop offset="1" stop-color="#7d9a34"/></linearGradient></defs><path d="M2 0 H16 L20 4 V17 Q20 19 18 19 H2 Q0 19 0 17 V2 Q0 0 2 0 Z" fill="url(#gs)"/><rect x="3" y="1" width="10" height="5" fill="#dfe8bb"/><rect x="3" y="9" width="14" height="8" fill="#e2eab9"/><rect x="5" y="11.5" width="10" height="1" fill="#9fb45a"/><rect x="5" y="14" width="10" height="1" fill="#9fb45a"/></svg>
<div class="t" style="left:885.0px;top:559.3px;font-size:12px;line-height:12px;font-weight:normal;color:#111;letter-spacing:-0.60px;transform:scaleX(0.9396);transform-origin:0 0;">Save</div>
</body></html>
